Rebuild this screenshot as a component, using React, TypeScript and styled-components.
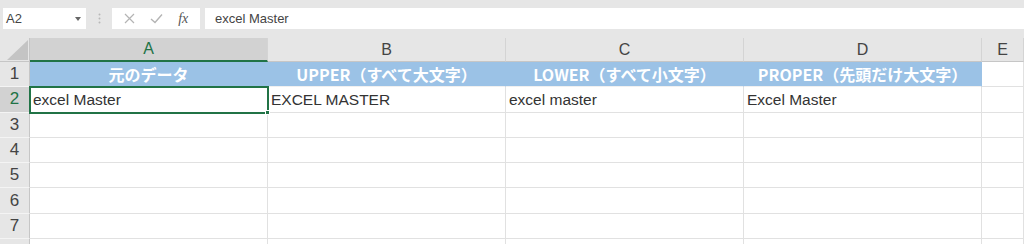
import React from 'react';
import styled, { createGlobalStyle, css } from 'styled-components';

const GlobalStyle = createGlobalStyle`
  html, body {
    margin: 0;
    padding: 0;
    background: #ffffff;
  }
  body {
    font-family: "Liberation Sans", "Noto Sans CJK JP", sans-serif;
    color: #333;
  }
`;

const GREEN = '#217346';
const ROW_H = '25.3px';

const Toolbar = styled.div`
  display: flex;
  align-items: flex-start;
  height: 38px;
  padding-top: 8px;
  box-sizing: border-box;
  background: #e6e6e6;
`;

const NameBox = styled.div`
  display: flex;
  align-items: center;
  justify-content: space-between;
  width: 83px;
  height: 21px;
  margin-left: 3px;
  padding: 0 5px 0 3px;
  box-sizing: border-box;
  background: #fff;
  font-size: 13px;
  color: #444;
`;

const Caret = styled.span`
  width: 0;
  height: 0;
  border-left: 3.5px solid transparent;
  border-right: 3.5px solid transparent;
  border-top: 4px solid #666;
`;

const Grip = styled.div`
  width: 26px;
  height: 21px;
  display: flex;
  align-items: center;
  justify-content: center;
`;

const FuncBox = styled.div`
  display: flex;
  align-items: center;
  justify-content: space-around;
  width: 88px;
  height: 21px;
  padding: 0 4px;
  box-sizing: border-box;
  background: #fff;
`;

const Fx = styled.span`
  font-family: "Liberation Serif", serif;
  font-style: italic;
  font-size: 14px;
  color: #555;
`;

const FormulaInput = styled.div`
  flex: 1;
  height: 21px;
  margin-left: 5px;
  padding-left: 10px;
  display: flex;
  align-items: center;
  background: #fff;
  font-size: 13px;
  color: #444;
`;

const Sheet = styled.div`
  display: grid;
  grid-template-columns: 30px repeat(4, 238px) 1fr;
  grid-template-rows: 24px;
  grid-auto-rows: ${ROW_H};
  background: #fff;
`;

const Corner = styled.div`
  background: #e6e6e6;
  border-right: 1px solid #c6c6c6;
  border-bottom: 1px solid #c6c6c6;
  display: flex;
  align-items: flex-end;
  justify-content: flex-end;
  padding: 0 1px 1px 0;
`;

const ColHead = styled.div<{ $active?: boolean }>`
  display: flex;
  align-items: center;
  justify-content: center;
  font-size: 16px;
  background: #e6e6e6;
  color: #444;
  border-right: 1px solid #d4d4d4;
  border-bottom: 1px solid #c6c6c6;
  box-sizing: border-box;
  ${p => p.$active && css`
    background: #d2d2d2;
    color: ${GREEN};
    border-bottom: 2px solid ${GREEN};
  `}
`;

const RowHead = styled.div<{ $active?: boolean }>`
  display: flex;
  align-items: center;
  justify-content: center;
  font-size: 17px;
  background: #e6e6e6;
  color: #444;
  border-right: 1px solid #c6c6c6;
  border-bottom: 1px solid #f4f4f4;
  box-sizing: border-box;
  ${p => p.$active && css`
    background: #d2d2d2;
    color: ${GREEN};
  `}
`;

const Cell = styled.div<{ $title?: boolean; $selected?: boolean }>`
  position: relative;
  display: flex;
  align-items: center;
  padding: 1px 0 0 3px;
  box-sizing: border-box;
  font-size: 15.5px;
  color: #333;
  white-space: nowrap;
  border-right: 1px solid #e1e1e1;
  border-bottom: 1px solid #e1e1e1;
  ${p => p.$title && css`
    justify-content: center;
    padding: 0;
    background: #9bc2e6;
    color: #fff;
    font-family: "Noto Sans CJK JP", sans-serif;
    font-size: 16px;
    font-weight: bold;
    border-right-color: #9bc2e6;
    border-bottom-color: #f0f0f0;
  `}
  ${p => p.$selected && css`
    outline: 2px solid ${GREEN};
    outline-offset: -1px;
    z-index: 1;
    &::after {
      content: '';
      position: absolute;
      right: -3px;
      bottom: -3px;
      width: 5px;
      height: 5px;
      background: ${GREEN};
      border: 1px solid #fff;
      box-sizing: border-box;
    }
  `}
`;

const titles = [
  '元のデータ',
  'UPPER（すべて大文字）',
  'LOWER（すべて小文字）',
  'PROPER（先頭だけ大文字）',
];

const values = ['excel Master', 'EXCEL MASTER', 'excel master', 'Excel Master'];

const cols = ['A', 'B', 'C', 'D', 'E'];

export default function App() {
  return (
    <>
      <GlobalStyle />
      <Toolbar>
        <NameBox>
          A2
          <Caret />
        </NameBox>
        <Grip>
          <svg width="3" height="11" viewBox="0 0 3 11">
            <circle cx="1.5" cy="1.5" r="1" fill="#b8b8b8" />
            <circle cx="1.5" cy="5.5" r="1" fill="#b8b8b8" />
            <circle cx="1.5" cy="9.5" r="1" fill="#b8b8b8" />
          </svg>
        </Grip>
        <FuncBox>
          <svg width="11" height="11" viewBox="0 0 11 11">
            <path d="M1 1 L10 10 M10 1 L1 10" stroke="#b4b4b4" strokeWidth="1.2" fill="none" />
          </svg>
          <svg width="13" height="11" viewBox="0 0 13 11">
            <path d="M1 6 L5 9.5 L12 1.5" stroke="#b4b4b4" strokeWidth="1.4" fill="none" />
          </svg>
          <Fx>fx</Fx>
        </FuncBox>
        <FormulaInput>excel Master</FormulaInput>
      </Toolbar>
      <Sheet>
        <Corner>
          <svg width="21" height="20" viewBox="0 0 21 20">
            <polygon points="21,0 21,20 0,20" fill="#c4c4c4" />
          </svg>
        </Corner>
        {cols.map(c => (
          <ColHead key={c} $active={c === 'A'}>{c}</ColHead>
        ))}

        <RowHead>1</RowHead>
        {titles.map(t => (
          <Cell key={t} $title>{t}</Cell>
        ))}
        <Cell />

        <RowHead $active>2</RowHead>
        {values.map((v, i) => (
          <Cell key={v} $selected={i === 0}>{v}</Cell>
        ))}
        <Cell />

        {[3, 4, 5, 6, 7].map(r => (
          <React.Fragment key={r}>
            <RowHead>{r}</RowHead>
            {cols.map(c => (
              <Cell key={c} />
            ))}
          </React.Fragment>
        ))}
        {/* row 8 lies below the window edge; only its top strip shows */}
        <RowHead />
        {cols.map(c => (
          <Cell key={c} />
        ))}
      </Sheet>
    </>
  );
}
